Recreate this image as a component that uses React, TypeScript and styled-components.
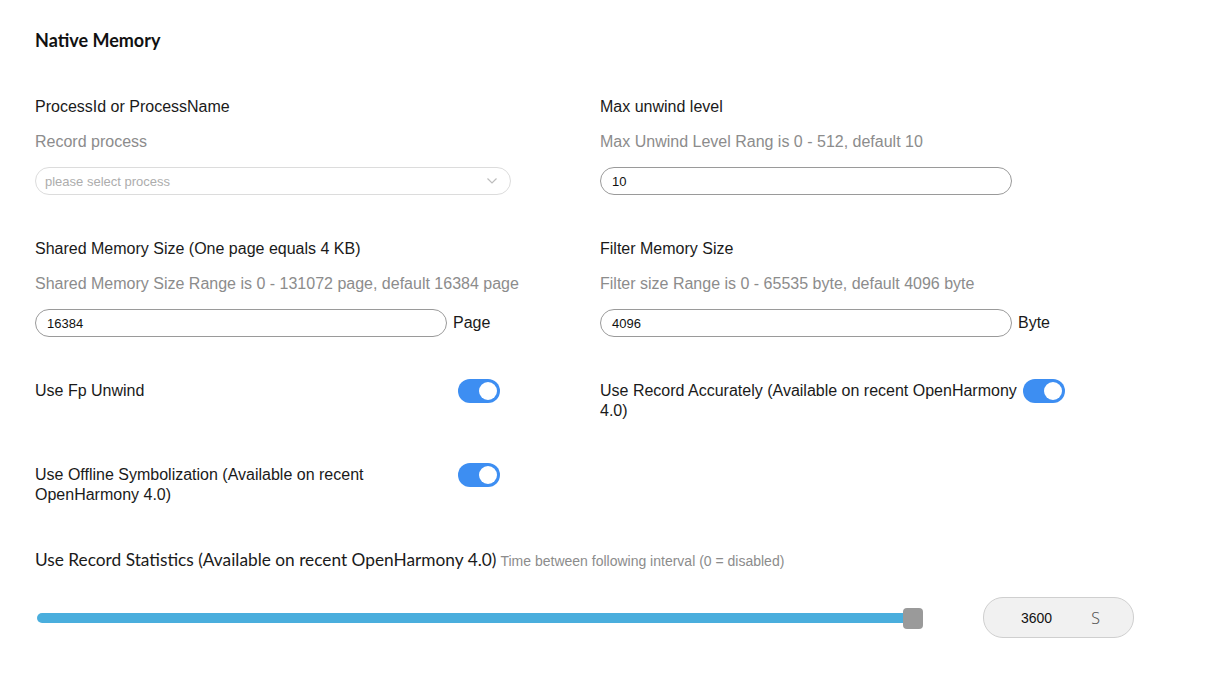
import React from "react";
import styled, { createGlobalStyle } from "styled-components";

const Global = createGlobalStyle`
  html, body { margin: 0; padding: 0; background: #fff; }
  body { font-family: "Liberation Sans", Arial, sans-serif; color: #1a1a1a; }
  * { box-sizing: border-box; }
`;

const Page = styled.div`
  width: 1232px;
  height: 697px;
  padding: 30px 0 0 35px;
`;

const Title = styled.h1`
  margin: 0;
  font-family: "Lato", "Noto Sans", sans-serif;
  font-weight: 700;
  font-size: 18px;
  line-height: 20px;
  color: #111;
`;

const FieldGrid = styled.div<{ $top: number; $gap: number }>`
  display: grid;
  grid-template-columns: 565px 565px;
  row-gap: ${(p) => p.$gap}px;
  margin-top: ${(p) => p.$top}px;
`;

const Field = styled.div`
  display: flex;
  flex-direction: column;
`;

const Label = styled.div`
  font-size: 16px;
  line-height: 20px;
  color: #1a1a1a;
`;

const Desc = styled.div`
  margin-top: 15px;
  font-size: 16px;
  line-height: 20px;
  color: #8c8c8c;
`;

const InputRow = styled.div`
  margin-top: 15px;
  display: flex;
  align-items: center;
  gap: 6px;
`;

const TextInput = styled.div<{ $w: number }>`
  width: ${(p) => p.$w}px;
  height: 28px;
  border: 1px solid #9a9a9a;
  border-radius: 14px;
  padding: 0 11px;
  display: flex;
  align-items: center;
  font-size: 13px;
  color: #111;
`;

const Select = styled.div`
  width: 476px;
  height: 28px;
  border: 1px solid #dcdcdc;
  border-radius: 14px;
  padding: 0 12px 0 9px;
  display: flex;
  align-items: center;
  justify-content: space-between;
  font-size: 13px;
  color: #adadad;
`;

const Unit = styled.span`
  font-size: 16px;
  color: #1a1a1a;
`;

const ToggleRow = styled.div`
  display: grid;
  grid-template-columns: 423px 42px;
  align-items: start;
`;

const ToggleLabel = styled.div`
  padding-top: 2px;
  width: 418px;
  font-size: 16px;
  line-height: 20px;
  color: #1a1a1a;
`;

const Toggle = styled.div<{ $on: boolean }>`
  position: relative;
  width: 42px;
  height: 24px;
  border-radius: 12px;
  background: ${(p) => (p.$on ? "#3d8ef2" : "#ccc")};
  &::after {
    content: "";
    position: absolute;
    top: 3px;
    left: ${(p) => (p.$on ? "21px" : "3px")};
    width: 18px;
    height: 18px;
    border-radius: 50%;
    background: #fff;
  }
`;

const StatsLabel = styled.div`
  margin-top: 45px;
  font-family: "Lato", "Noto Sans", sans-serif;
  font-size: 17.3px;
  line-height: 20px;
  color: #1a1a1a;
`;

const StatsHint = styled.span`
  font-family: "Liberation Sans", Arial, sans-serif;
  font-size: 14px;
  color: #8c8c8c;
  margin-left: 4px;
`;

const SliderRow = styled.div`
  margin-top: 26px;
  display: flex;
  align-items: center;
  gap: 58px;
`;

const Track = styled.div`
  position: relative;
  width: 890px;
  height: 40px;
  display: flex;
  align-items: center;
`;

const Fill = styled.div`
  margin-left: 2px;
  height: 10px;
  border-radius: 5px;
  background: #4aaedd;
`;

const Thumb = styled.div`
  position: absolute;
  top: 10px;
  width: 20px;
  height: 21px;
  border-radius: 4px;
  background: #9a9a9a;
`;

const ValueBox = styled.div`
  width: 151px;
  height: 41px;
  border: 1px solid #cfcfcf;
  border-radius: 20px;
  background: #f1f1f1;
  display: flex;
  align-items: center;
  padding-left: 37px;
  font-size: 14px;
  color: #111;
`;

const ValueUnit = styled.span`
  margin-left: 39px;
  font-family: "Noto Sans", sans-serif;
  font-weight: 300;
  font-size: 16px;
  color: #555;
`;

const Chevron = () => (
  <svg width="12" height="8" viewBox="0 0 12 8" fill="none">
    <path d="M1.5 1.5 L6 6 L10.5 1.5" stroke="#bdbdbd" strokeWidth="1.2" />
  </svg>
);

export default function App() {
  const value = 3600;
  const max = 3600;
  const pct = value / max;
  const fillWidth = Math.round(pct * 875);
  return (
    <Page>
      <Global />
      <Title>Native Memory</Title>
      <FieldGrid $top={47} $gap={44}>
        <Field>
          <Label>ProcessId or ProcessName</Label>
          <Desc>Record process</Desc>
          <InputRow>
            <Select>
              <span>please select process</span>
              <Chevron />
            </Select>
          </InputRow>
        </Field>
        <Field>
          <Label>Max unwind level</Label>
          <Desc>Max Unwind Level Rang is 0 - 512, default 10</Desc>
          <InputRow>
            <TextInput $w={412}>10</TextInput>
          </InputRow>
        </Field>
        <Field>
          <Label>Shared Memory Size (One page equals 4 KB)</Label>
          <Desc>Shared Memory Size Range is 0 - 131072 page, default 16384 page</Desc>
          <InputRow>
            <TextInput $w={412}>16384</TextInput>
            <Unit>Page</Unit>
          </InputRow>
        </Field>
        <Field>
          <Label>Filter Memory Size</Label>
          <Desc>Filter size Range is 0 - 65535 byte, default 4096 byte</Desc>
          <InputRow>
            <TextInput $w={412}>4096</TextInput>
            <Unit>Byte</Unit>
          </InputRow>
        </Field>
      </FieldGrid>
      <FieldGrid $top={42} $gap={42}>
        <ToggleRow>
          <ToggleLabel>Use Fp Unwind</ToggleLabel>
          <Toggle $on />
        </ToggleRow>
        <ToggleRow>
          <ToggleLabel>Use Record Accurately (Available on recent OpenHarmony 4.0)</ToggleLabel>
          <Toggle $on />
        </ToggleRow>
        <ToggleRow>
          <ToggleLabel>Use Offline Symbolization (Available on recent OpenHarmony 4.0)</ToggleLabel>
          <Toggle $on />
        </ToggleRow>
      </FieldGrid>
      <StatsLabel>
        Use Record Statistics (Available on recent OpenHarmony 4.0)
        <StatsHint>Time between following interval (0 = disabled)</StatsHint>
      </StatsLabel>
      <SliderRow>
        <Track>
          <Fill style={{ width: fillWidth }} />
          <Thumb style={{ left: fillWidth - 7 }} />
        </Track>
        <ValueBox>
          {value}
          <ValueUnit>S</ValueUnit>
        </ValueBox>
      </SliderRow>
    </Page>
  );
}
